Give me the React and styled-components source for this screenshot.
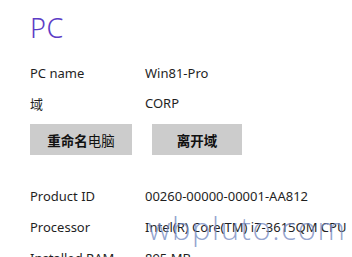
import React from "react";
import styled, { createGlobalStyle } from "styled-components";

const Global = createGlobalStyle`
  body {
    margin: 0;
    background: #ffffff;
    font-family: "Noto Sans", "Noto Sans CJK SC", sans-serif;
    overflow: hidden;
  }
`;

const Page = styled.div`
  position: relative;
  width: 352px;
  height: 257px;
  overflow: hidden;
  padding: 9px 0 0 30px;
  box-sizing: border-box;
  color: #1f1f1f;
`;

const Title = styled.div`
  font-size: 27px;
  font-weight: 300;
  color: #5c3dc6;
  line-height: 38px;
  letter-spacing: 0.5px;
`;

const Rows = styled.div`
  margin-top: 11px;
  display: flex;
  flex-direction: column;
`;

const Row = styled.div`
  display: grid;
  grid-template-columns: 115px auto;
  height: ${(p) => p.h || 30}px;
  align-items: center;
  font-size: 13px;
  white-space: nowrap;
`;

const Buttons = styled.div`
  display: flex;
  gap: 20px;
  margin-top: 6px;
  margin-bottom: 25px;
`;

const Button = styled.div`
  width: ${(p) => p.w}px;
  height: 31px;
  background: #cccccc;
  display: flex;
  align-items: center;
  justify-content: center;
  font-family: "Noto Sans CJK SC", sans-serif;
  font-size: 13.5px;
  font-weight: 700;
  color: #111;
  span {
    font-weight: 400;
  }
`;

const Watermark = styled.div`
  position: absolute;
  left: 148px;
  top: 208px;
  line-height: 40px;
  font-family: "Open Sans", sans-serif;
  font-size: 31px;
  font-weight: 300;
  color: rgba(120, 140, 195, 0.8);
  letter-spacing: 1.6px;
  white-space: nowrap;
  pointer-events: none;
`;

export default function App() {
  return (
    <>
      <Global />
      <Page>
        <Title>PC</Title>
        <Rows>
          <Row>
            <span>PC name</span>
            <span>Win81-Pro</span>
          </Row>
          <Row>
            <span>域</span>
            <span>CORP</span>
          </Row>
          <Buttons>
            <Button w={102}>
              重命名<span>电脑</span>
            </Button>
            <Button w={90}>离开域</Button>
          </Buttons>
          <Row h={31}>
            <span>Product ID</span>
            <span>00260-00000-00001-AA812</span>
          </Row>
          <Row h={31}>
            <span>Processor</span>
            <span>Intel(R) Core(TM) i7-3615QM CPU</span>
          </Row>
          <Row h={31}>
            <span>Installed RAM</span>
            <span>895 MB</span>
          </Row>
        </Rows>
        <Watermark>wbpluto.com</Watermark>
      </Page>
    </>
  );
}
